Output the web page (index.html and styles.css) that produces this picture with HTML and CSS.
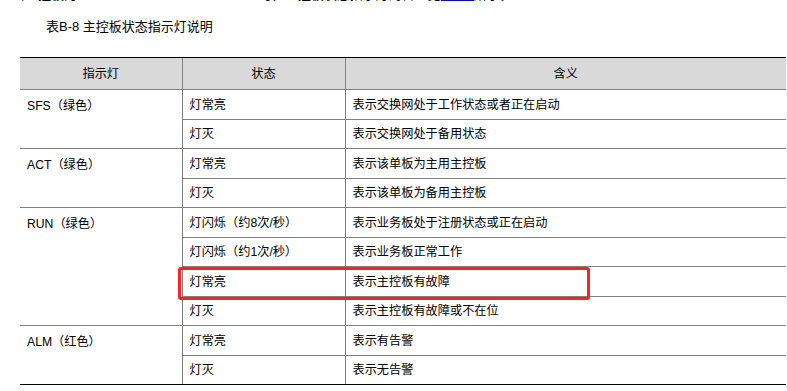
FILE: index.html
```html
<!DOCTYPE html>
<html lang="zh">
<head>
<meta charset="utf-8">
<link rel="stylesheet" href="styles.css">
</head>
<body>
<p class="lead">当主控板为 LSUM1SUPA0/LSUM1SUPB0 时，主控板状态指示灯的含义见<a class="ref" href="#">表B-8</a>所示。</p>
<p class="caption">表B-8 主控板状态指示灯说明</p>
<div class="wrap">
<table class="tbl">
<colgroup><col class="c1"><col class="c2"><col class="c3"></colgroup>
<thead>
<tr><th>指示灯</th><th>状态</th><th>含义</th></tr>
</thead>
<tbody>
<tr><td rowspan="2" class="lamp">SFS（绿色）</td><td>灯常亮</td><td>表示交换网处于工作状态或者正在启动</td></tr>
<tr><td>灯灭</td><td>表示交换网处于备用状态</td></tr>
<tr><td rowspan="2" class="lamp">ACT（绿色）</td><td>灯常亮</td><td>表示该单板为主用主控板</td></tr>
<tr><td>灯灭</td><td>表示该单板为备用主控板</td></tr>
<tr><td rowspan="4" class="lamp">RUN（绿色）</td><td>灯闪烁（约8次/秒）</td><td>表示业务板处于注册状态或正在启动</td></tr>
<tr><td>灯闪烁（约1次/秒）</td><td>表示业务板正常工作</td></tr>
<tr><td>灯常亮</td><td>表示主控板有故障</td></tr>
<tr><td>灯灭</td><td>表示主控板有故障或不在位</td></tr>
<tr><td rowspan="2" class="lamp last">ALM（红色）</td><td>灯常亮</td><td>表示有告警</td></tr>
<tr class="end"><td>灯灭</td><td>表示无告警</td></tr>
</tbody>
</table>
<div class="mark"></div>
</div>
</body>
</html>
```
FILE: styles.css
```css
html, body {
  margin: 0;
  padding: 0;
  background: #ffffff;
}
body {
  font-family: "Liberation Sans", "Noto Sans CJK SC", sans-serif;
  font-size: 13px;
  color: #000;
}
.lead {
  margin: -14px 0 0 12px;
  line-height: 17px;
  white-space: nowrap;
}
.ref {
  color: #0000ee;
}
.caption {
  margin: 0 0 0 46px;
  padding-top: 15px;
  line-height: 18px;
}
.wrap {
  position: relative;
  margin: 21px 0 0 20px;
  width: 766px;
}
.tbl {
  border-collapse: collapse;
  width: 766px;
  table-layout: fixed;
  font-size: 12.2px;
}
.c1 { width: 162px; }
.c2 { width: 163px; }
.c3 { width: 441px; }
.tbl thead tr { height: 32px; }
.tbl tbody tr { height: 29.5px; }
.tbl th {
  background: #d9d9d9;
  font-weight: normal;
  padding: 0;
  text-align: center;
  border-top: 1px solid #000;
  border-bottom: 1px solid #808080;
  border-left: 1px solid #808080;
  line-height: 16px;
}
.tbl th:first-child { border-left: none; }
.tbl td {
  padding: 1px 0 0 7px;
  border-bottom: 1px solid #808080;
  border-left: 1px solid #808080;
  line-height: 16px;
  vertical-align: middle;
  white-space: nowrap;
}
.tbl td.lamp {
  border-left: none;
  vertical-align: top;
  padding-top: 8px;
}
.tbl td.last,
.tbl tr.end td {
  border-bottom: 1px solid #000;
}
.mark {
  position: absolute;
  left: 158px;
  top: 210px;
  width: 406px;
  height: 27px;
  border: 3px solid #ff2222;
  border-radius: 3px;
}
```
